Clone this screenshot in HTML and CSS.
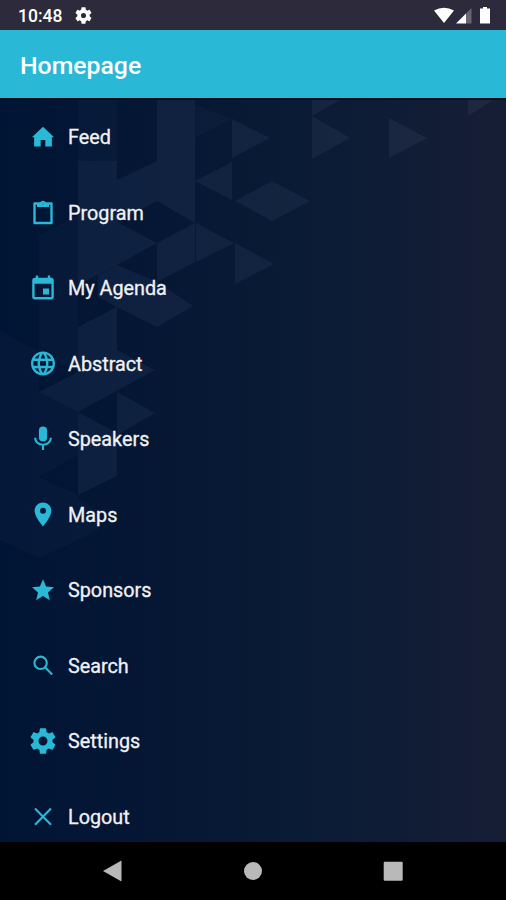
FILE: index.html
```
<!DOCTYPE html>
<html lang="en">
<head>
    <meta charset="UTF-8">
    <meta name="viewport" content="width=device-width, initial-scale=1.0">
    <title>Homepage</title>
    <link rel="stylesheet" href="styles.css">
</head>
<body>
    <div class="status-bar">
        <span class="time">10:48</span>
        <svg class="status-gear" viewBox="2 2 20 20"><path d="M19.14 12.94c.04-.3.06-.61.06-.94 0-.32-.02-.64-.07-.94l2.03-1.58c.18-.14.23-.41.12-.61l-1.92-3.32c-.12-.22-.37-.29-.59-.22l-2.39.96c-.5-.38-1.03-.7-1.62-.94l-.36-2.54c-.04-.24-.24-.41-.48-.41h-3.84c-.24 0-.43.17-.47.41l-.36 2.54c-.59.24-1.13.57-1.62.94l-2.39-.96c-.22-.08-.47 0-.59.22L2.74 8.87c-.12.21-.08.47.12.61l2.03 1.58c-.05.3-.09.63-.09.94s.02.64.07.94l-2.03 1.58c-.18.14-.23.41-.12.61l1.92 3.32c.12.22.37.29.59.22l2.39-.96c.5.38 1.03.7 1.62.94l.36 2.54c.05.24.24.41.48.41h3.84c.24 0 .44-.17.47-.41l.36-2.54c.59-.24 1.13-.56 1.62-.94l2.39.96c.22.08.47 0 .59-.22l1.92-3.32c.12-.22.07-.47-.12-.61zM12 15a3 3 0 1 1 0-6 3 3 0 0 1 0 6z"/></svg>
        <svg class="status-icons" viewBox="0 0 58 18">
            <path d="M0 3.600Q10 -2.200 20 3.600L10 16z"/>
            <path d="M22 16.500L32 6.500V16.500z"/>
            <path class="faded" d="M32 6.500L37.500 1V16.500H32z"/>
            <path d="M49 0h4v1.600h3v15H46V1.600h3z"/>
        </svg>
    </div>

    <header>
        <h1>Homepage</h1>
    </header>

    <main>
        <svg class="pattern" viewBox="0 100 506 742">
            <path d="M157 99H195V223L157 201L117 222L157 243L117 265L78 285V161H117V180L157 161z"/>
            <path d="M157 243L195 223V262L157 282z"/>
            <path d="M196 223L234 243L196 262z"/>
            <path d="M235 243L274 264L235 284z"/>
            <path d="M195 181L232 162V200z"/>
            <path d="M232 119L270 138L232 158z"/>
            <path d="M235 201L272 181V221z"/>
            <path d="M272 181L310 201L272 221z"/>
            <path d="M312 116L350 138L312 159z"/>
            <path d="M389 118L427 138L389 158z"/>
            <path d="M312 99H342L312 116z"/>
            <path d="M468 99H495L468 116z"/>
            <path d="M117 265L157 282L193 306L157 327L117 307L98 297V275z"/>
            <path d="M78 327L117 307V350L155 370L78 412L39 392L78 372z"/>
            <path d="M117 392L155 413L117 435z"/>
            <path d="M78 412L117 433V476L78 495z"/>
            <g class="dim">
                <path d="M78 99H117V161H78z"/>
                <path d="M195 105L232 119L195 138z"/>
                <path d="M39 235L78 215V372L39 352z"/>
                <path d="M0 330L39 352V392L78 412V455L39 477L0 500z"/>
                <path d="M0 500L39 477L78 495V540L39 558L0 540z"/>
                <path d="M78 499L98 510V530L78 540z"/>
            </g>
        </svg>
        <nav>
            <ul class="menu">
                <li><a href="#"><svg viewBox="0 0 30 30"><path d="M12.700 24.500v-6.500h4.600v6.500h6.600V15.300h2.200L15 4.700 3.900 15.300h2.200v9.200z"/></svg>Feed</a></li>
                <li><a href="#"><svg viewBox="0 0 30 30"><path class="line" d="M6.500 5.500h17v19.500h-17z"/><path fill-rule="evenodd" d="M9 5h3a3.100 3.100 0 0 1 6 0h3v4H9zM15 4.200a1.300 1.300 0 1 0 0 2.600 1.300 1.300 0 0 0 0-2.600z"/></svg>Program</a></li>
                <li><a href="#"><svg viewBox="-0.5 -1 25 25"><path d="M17 12h-5v5h5v-5zM16 1v2H8V1H6v2H5c-1.110 0-1.990.9-1.990 2L3 19c0 1.100.89 2 2 2h14c1.100 0 2-.9 2-2V5c0-1.100-.9-2-2-2h-1V1h-2zm3 18H5V8h14v11z"/></svg>My Agenda</a></li>
                <li><a href="#"><svg viewBox="-0.5 0 25 25"><path d="M11.990 2C6.470 2 2 6.480 2 12s4.470 10 9.990 10C17.520 22 22 17.520 22 12S17.520 2 11.990 2zm6.930 6h-2.950c-.32-1.250-.78-2.450-1.380-3.560 1.840.63 3.370 1.910 4.330 3.560zM12 4.040c.83 1.200 1.480 2.530 1.910 3.960h-3.820c.43-1.430 1.080-2.760 1.910-3.960zM4.260 14C4.100 13.360 4 12.690 4 12s.1-1.360.26-2h3.380c-.08.66-.14 1.320-.14 2s.06 1.340.14 2H4.260zm.82 2h2.950c.32 1.250.78 2.450 1.380 3.560-1.840-.63-3.370-1.900-4.330-3.560zm2.950-8H5.080c.96-1.660 2.490-2.930 4.330-3.560C8.810 5.550 8.350 6.750 8.030 8zM12 19.960c-.83-1.200-1.480-2.530-1.910-3.960h3.820c-.43 1.430-1.080 2.760-1.910 3.960zM14.340 14H9.660c-.09-.66-.16-1.320-.16-2s.07-1.350.16-2h4.680c.09.65.16 1.320.16 2s-.07 1.340-.16 2zm.25 5.560c.6-1.110 1.060-2.310 1.380-3.560h2.950c-.96 1.650-2.490 2.930-4.330 3.560zM16.360 14c.08-.66.14-1.320.14-2s-.06-1.340-.14-2h3.380c.16.64.26 1.310.26 2s-.1 1.360-.26 2h-3.380z"/></svg>Abstract</a></li>
                <li><a href="#"><svg viewBox="0 0 30 30"><rect x="10.900" y="2.500" width="8.200" height="15" rx="4.100"/><path class="thin" d="M7.100 13.800a7.900 7 0 0 0 15.800 0M15 21v5"/></svg>Speakers</a></li>
                <li><a href="#"><svg viewBox="-0.5 0 25 25"><path d="M12 2C8.130 2 5 5.130 5 9c0 5.250 7 13 7 13s7-7.750 7-13c0-3.870-3.130-7-7-7zm0 9.500a2.500 2.500 0 0 1 0-5 2.500 2.500 0 0 1 0 5z"/></svg>Maps</a></li>
                <li><a href="#"><svg viewBox="-1.600 -1.500 27.200 27.200"><path d="M12 17.270L18.180 21l-1.640-7.030L22 9.240l-7.190-.61L12 2 9.190 8.630 2 9.240l5.460 4.730L5.820 21z" transform="translate(0 .3)"/></svg>Sponsors</a></li>
                <li><a href="#"><svg viewBox="0 0 30 30"><circle class="thin" cx="12.600" cy="11.800" r="6.200"/><path class="thin" d="M17 16.200L24.200 23.600"/></svg>Search</a></li>
                <li><a href="#"><svg viewBox="0.200 0.200 23.600 23.600"><path d="M19.430 12.980c.04-.32.07-.64.07-.98s-.03-.66-.07-.98l2.110-1.650c.19-.15.24-.42.12-.64l-2-3.460c-.12-.22-.39-.3-.61-.22l-2.490 1c-.52-.4-1.080-.73-1.690-.98l-.38-2.650C14.460 2.180 14.250 2 14 2h-4c-.25 0-.46.18-.49.42l-.38 2.650c-.61.25-1.170.59-1.690.98l-2.490-1c-.23-.09-.49 0-.61.22l-2 3.460c-.13.22-.07.49.12.64l2.110 1.650c-.04.32-.07.65-.07.98s.03.66.07.98l-2.110 1.650c-.19.15-.24.42-.12.64l2 3.460c.12.22.39.3.61.22l2.490-1c.52.4 1.080.73 1.690.98l.38 2.650c.03.24.24.42.49.42h4c.25 0 .46-.18.49-.42l.38-2.650c.61-.25 1.170-.59 1.690-.98l2.490 1c.23.09.49 0 .61-.22l2-3.460c.12-.22.07-.49-.12-.64l-2.110-1.650zM12 15.500a3.500 3.500 0 1 1 0-7 3.500 3.500 0 0 1 0 7z"/></svg>Settings</a></li>
                <li><a href="#"><svg viewBox="0 0 30 30"><path class="thin" d="M7 6.400L23 22.800M23 6.400L7 22.800"/></svg>Logout</a></li>
            </ul>
        </nav>
    </main>

    <footer>
        <svg viewBox="0 0 22 22"><path d="M1 11L19.500 .5V21.500z"/></svg>
        <svg viewBox="0 0 22 22"><circle cx="11" cy="11" r="9"/></svg>
        <svg viewBox="0 0 22 22"><rect x="1.700" y="1.700" width="19" height="19" rx="1"/></svg>
    </footer>
</body>
</html>
```
FILE: styles.css
```
* {
    margin: 0;
    padding: 0;
    box-sizing: border-box;
}

body {
    display: flex;
    flex-direction: column;
    height: 900px;
    overflow: hidden;
    font-family: Roboto, sans-serif;
    background: #000;
    color: #f1f1f3;
}

/* Status bar */
.status-bar {
    display: flex;
    align-items: center;
    height: 30px;
    padding: 2px 14px 0 18px;
    background: #2d2b3b;
    color: #fff;
}

.status-bar svg {
    fill: #fff;
}

.time {
    width: 57px;
    font-size: 17.5px;
    font-weight: 500;
}

.status-gear {
    width: 17px;
    height: 17px;
    margin-bottom: 1px;
}

.status-icons {
    width: 58px;
    height: 18px;
    margin-left: auto;
    margin-bottom: 1px;
}

.status-icons .faded {
    fill: #686672;
}

header {
    display: flex;
    align-items: center;
    height: 70px;
    padding: 3px 20px 0;
    background: #29b8d5;
    border-bottom: 2px solid #03101d;
    color: #fff;
}

header h1 {
    font-size: 24.8px;
    font-weight: 500;
}

/* Menu */
main {
    position: relative;
    flex: 1;
    overflow: hidden;
    background: linear-gradient(90deg, #001435 0%, #051733 30%, #0a1b35 60%, #121d35 85%, #161e35 100%);
}

.pattern {
    position: absolute;
    top: 0;
    left: 0;
    width: 506px;
    height: 742px;
    fill: rgba(190, 200, 255, 0.06);
}

.pattern .dim {
    fill: rgba(190, 200, 255, 0.028);
}

.menu {
    position: relative;
    list-style: none;
}

.menu a {
    display: flex;
    align-items: center;
    gap: 10px;
    height: 75.5px;
    padding-left: 28px;
    color: inherit;
    font-size: 19.8px;
    -webkit-text-stroke: 0.3px #f1f1f3;
    text-decoration: none;
}

.menu svg {
    width: 30px;
    height: 30px;
    margin-bottom: 1px;
    fill: #29b8d5;
}

.menu .line,
.menu .thin {
    fill: none;
    stroke: #29b8d5;
    stroke-width: 2.4;
    stroke-linejoin: round;
}

.menu .thin {
    stroke-width: 2.1;
}

/* Navigation buttons */
footer {
    display: flex;
    align-items: center;
    justify-content: space-between;
    height: 58px;
    padding: 0 102px;
    background: #000;
}

footer svg {
    width: 22px;
    height: 22px;
    fill: #b9b9b9;
}
```
